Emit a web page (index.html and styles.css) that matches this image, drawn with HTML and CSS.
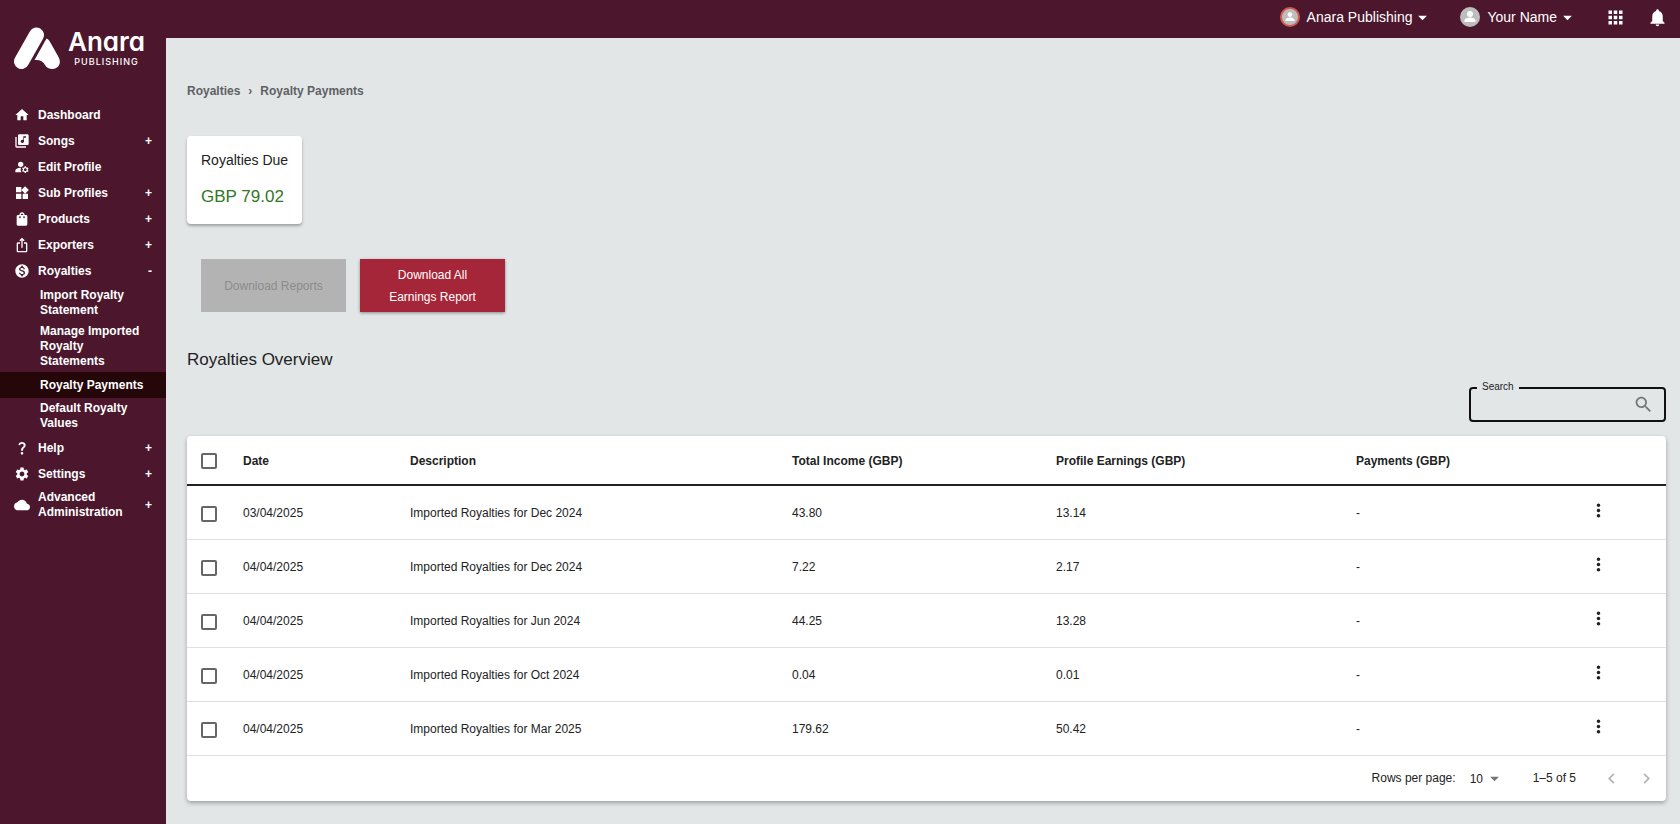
FILE: index.html
```html
<!DOCTYPE html>
<html lang="en">
<head>
    <meta charset="UTF-8">
    <meta name="viewport" content="width=device-width, initial-scale=1.0">
    <title>Royalty Payments</title>
    <link rel="stylesheet" href="styles.css">
</head>
<body>
    <aside class="sidebar">
        <a class="logo" href="#">
            <svg class="logo-mark" viewBox="0 0 46 42" aria-hidden="true">
                <path d="M7.500 34.500 L22.500 8" stroke="#fff" stroke-width="15" stroke-linecap="round"/>
                <path d="M32.500 11.500 Q34 11.500 35.500 14 L44.800 30.500 C48 37 43.500 42 38.500 42 C35 42 32.500 40.500 31 38 C29 34 25.500 32.500 20.500 33 Z" fill="#fff"/>
            </svg>
            <span class="logo-text">
                <span class="logo-name">Anara</span>
                <span class="logo-sub">PUBLISHING</span>
            </span>
        </a>

        <nav>
            <ul class="menu">
                <li><a href="#">
                    <svg class="icon" viewBox="0 0 24 24"><path d="M10 20v-6h4v6h5v-8h3L12 3 2 12h3v8z"/></svg>
                    <span>Dashboard</span>
                </a></li>
                <li><a href="#">
                    <svg class="icon" viewBox="0 0 24 24"><path d="M20 2H8c-1.100 0-2 .9-2 2v12c0 1.100.9 2 2 2h12c1.100 0 2-.9 2-2V4c0-1.100-.9-2-2-2zm-2 5h-3v5.500c0 1.380-1.120 2.500-2.500 2.500S10 13.880 10 12.500s1.120-2.500 2.500-2.500c.57 0 1.080.19 1.500.51V5h4v2zM4 6H2v14c0 1.100.9 2 2 2h14v-2H4V6z"/></svg>
                    <span>Songs</span><b>+</b>
                </a></li>
                <li><a href="#">
                    <svg class="icon" viewBox="0 0 24 24"><circle cx="10" cy="8" r="4"/><path d="M10.670 13.020C10.450 13.010 10.230 13 10 13c-2.420 0-4.680.67-6.610 1.820C2.510 15.340 2 16.320 2 17.350V20h9.260c-.79-1.130-1.260-2.510-1.260-4 0-1.070.25-2.070.67-2.980zM20.750 16c0-.22-.03-.42-.06-.63l1.140-1.010-1-1.730-1.450.49c-.32-.27-.68-.48-1.080-.63L18 11h-2l-.3 1.490c-.4.15-.76.36-1.080.63l-1.450-.49-1 1.730 1.140 1.010c-.03.21-.06.41-.06.63s.03.42.06.63l-1.140 1.010 1 1.730 1.450-.49c.32.27.68.48 1.080.63L16 21h2l.3-1.490c.4-.15.76-.36 1.080-.63l1.450.49 1-1.730-1.140-1.010c.03-.21.06-.41.06-.63zM17 18c-1.100 0-2-.9-2-2s.9-2 2-2 2 .9 2 2-.9 2-2 2z"/></svg>
                    <span>Edit Profile</span>
                </a></li>
                <li><a href="#">
                    <svg class="icon" viewBox="0 0 24 24"><path d="M13 13v8h8v-8h-8zM3 21h8v-8H3v8zM3 3v8h8V3H3zm13.660-1.310L11 7.340 16.660 13l5.660-5.660-5.660-5.650z"/></svg>
                    <span>Sub Profiles</span><b>+</b>
                </a></li>
                <li><a href="#">
                    <svg class="icon" viewBox="0 0 24 24"><path d="M18 6h-2c0-2.210-1.790-4-4-4S8 3.790 8 6H6c-1.100 0-2 .9-2 2v12c0 1.100.9 2 2 2h12c1.100 0 2-.9 2-2V8c0-1.100-.9-2-2-2zm-8 4c0 .55-.45 1-1 1s-1-.45-1-1V8h2v2zm2-6c1.100 0 2 .9 2 2h-4c0-1.100.9-2 2-2zm4 6c0 .55-.45 1-1 1s-1-.45-1-1V8h2v2z"/></svg>
                    <span>Products</span><b>+</b>
                </a></li>
                <li><a href="#">
                    <svg class="icon" viewBox="0 0 24 24"><path d="M16 5l-1.420 1.420-1.590-1.590V16h-1.980V4.830L9.420 6.420 8 5l4-4 4 4zm4 5v11c0 1.100-.9 2-2 2H6c-1.110 0-2-.9-2-2V10c0-1.110.89-2 2-2h3v2H6v11h12V10h-3V8h3c1.100 0 2 .89 2 2z"/></svg>
                    <span>Exporters</span><b>+</b>
                </a></li>
                <li>
                    <a href="#">
                        <svg class="icon" viewBox="0 0 24 24"><path d="M12 2C6.480 2 2 6.480 2 12s4.480 10 10 10 10-4.480 10-10S17.520 2 12 2zm1.410 16.090V20h-2.670v-1.930c-1.710-.36-3.160-1.460-3.270-3.400h1.960c.1 1.050.82 1.870 2.650 1.870 1.960 0 2.400-.98 2.400-1.590 0-.83-.44-1.610-2.670-2.140-2.480-.6-4.180-1.620-4.180-3.670 0-1.720 1.390-2.840 3.110-3.210V4h2.670v1.950c1.860.45 2.790 1.860 2.850 3.390H14.300c-.05-1.110-.64-1.870-2.220-1.870-1.500 0-2.400.68-2.400 1.640 0 .84.65 1.390 2.670 1.910s4.180 1.390 4.180 3.910c-.01 1.830-1.380 2.830-3.120 3.160z"/></svg>
                        <span>Royalties</span><b>-</b>
                    </a>
                    <ul class="submenu">
                        <li><a href="#">Import Royalty Statement</a></li>
                        <li><a href="#">Manage Imported Royalty Statements</a></li>
                        <li><a class="active" href="#">Royalty Payments</a></li>
                        <li><a href="#">Default Royalty Values</a></li>
                    </ul>
                </li>
                <li><a href="#">
                    <svg class="icon" viewBox="0 0 24 24"><path d="M11.070 12.850c.77-1.390 2.250-2.210 3.110-3.440.91-1.290.4-3.700-2.180-3.700-1.690 0-2.520 1.280-2.870 2.340L6.540 6.960C7.250 4.830 9.180 3 11.990 3c2.350 0 3.960 1.070 4.780 2.410.7 1.150 1.110 3.300.03 4.900-1.200 1.770-2.350 2.310-2.970 3.450-.25.46-.35.76-.35 2.240h-2.890c-.01-.78-.13-2.050.48-3.150zM14 20c0 1.100-.9 2-2 2s-2-.9-2-2 .9-2 2-2 2 .9 2 2z"/></svg>
                    <span>Help</span><b>+</b>
                </a></li>
                <li><a href="#">
                    <svg class="icon" viewBox="0 0 24 24"><path d="M19.140 12.940c.04-.3.06-.61.06-.94 0-.32-.02-.64-.07-.94l2.030-1.580c.18-.14.23-.41.12-.61l-1.920-3.320c-.12-.22-.37-.29-.59-.22l-2.390.96c-.5-.38-1.030-.7-1.620-.94l-.36-2.540c-.04-.24-.24-.41-.48-.41h-3.840c-.24 0-.43.17-.47.41l-.36 2.540c-.59.24-1.130.57-1.620.94l-2.390-.96c-.22-.08-.47 0-.59.22L2.740 8.870c-.12.21-.08.47.12.61l2.030 1.580c-.05.3-.09.63-.09.94s.02.64.07.94l-2.030 1.580c-.18.14-.23.41-.12.61l1.920 3.320c.12.22.37.29.59.22l2.390-.96c.5.38 1.030.7 1.620.94l.36 2.540c.05.24.24.41.48.41h3.840c.24 0 .44-.17.47-.41l.36-2.540c.59-.24 1.130-.56 1.620-.94l2.390.96c.22.08.47 0 .59-.22l1.920-3.320c.12-.22.07-.47-.12-.61l-2.010-1.580zM12 15.600c-1.980 0-3.600-1.620-3.600-3.600s1.620-3.600 3.600-3.600 3.600 1.620 3.600 3.600-1.620 3.600-3.600 3.600z"/></svg>
                    <span>Settings</span><b>+</b>
                </a></li>
                <li><a href="#">
                    <svg class="icon" viewBox="0 0 24 24"><path d="M19.350 10.040C18.670 6.590 15.640 4 12 4 9.110 4 6.600 5.640 5.350 8.040 2.340 8.360 0 10.910 0 14c0 3.310 2.690 6 6 6h13c2.760 0 5-2.240 5-5 0-2.640-2.050-4.780-4.650-4.960z"/></svg>
                    <span>Advanced Administration</span><b>+</b>
                </a></li>
            </ul>
        </nav>
    </aside>

    <div class="page">
        <header class="topbar">
            <button type="button" class="account">
                <svg class="avatar avatar-ring" viewBox="0 0 20 20"><circle cx="10" cy="7" r="3"/><path d="M4.500 15v-1.500c0-2 3.600-2.900 5.500-2.900s5.500.9 5.500 2.900V15z"/></svg>
                <span>Anara Publishing</span>
                <svg class="caret" viewBox="0 0 24 24"><path d="M7 10l5 5 5-5z"/></svg>
            </button>
            <button type="button" class="account">
                <svg class="avatar" viewBox="0 0 20 20"><circle cx="10" cy="7" r="3"/><path d="M4.500 15v-1.500c0-2 3.600-2.900 5.500-2.900s5.500.9 5.500 2.900V15z"/></svg>
                <span>Your Name</span>
                <svg class="caret" viewBox="0 0 24 24"><path d="M7 10l5 5 5-5z"/></svg>
            </button>
            <button type="button" class="icon-button" aria-label="Apps">
                <svg viewBox="0 0 24 24"><path d="M4 8h4V4H4v4zm6 12h4v-4h-4v4zm-6 0h4v-4H4v4zm0-6h4v-4H4v4zm6 0h4v-4h-4v4zm6-10v4h4V4h-4zm-6 4h4V4h-4v4zm6 6h4v-4h-4v4zm0 6h4v-4h-4v4z"/></svg>
            </button>
            <button type="button" class="icon-button" aria-label="Notifications">
                <svg viewBox="0 0 24 24"><path d="M12 22c1.100 0 2-.9 2-2h-4c0 1.100.89 2 2 2zm6-6v-5c0-3.070-1.640-5.640-4.500-6.320V4c0-.83-.67-1.500-1.500-1.500s-1.500.67-1.500 1.500v.68C7.630 5.360 6 7.920 6 11v5l-2 2v1h16v-1l-2-2z"/></svg>
            </button>
        </header>

        <main>
            <nav class="breadcrumb" aria-label="Breadcrumb">
                <a href="#">Royalties</a>
                <span>›</span>
                <a href="#">Royalty Payments</a>
            </nav>

            <section class="due-card">
                <h2>Royalties Due</h2>
                <p>GBP 79.02</p>
            </section>

            <div class="button-row">
                <button type="button" disabled>Download Reports</button>
                <button type="button">Download All Earnings Report</button>
            </div>

            <h1>Royalties Overview</h1>

            <div class="search">
                <label for="search">Search</label>
                <input type="text" id="search" name="search">
                <svg viewBox="0 0 24 24"><path d="M15.500 14h-.79l-.28-.27C15.410 12.590 16 11.110 16 9.500 16 5.910 13.090 3 9.500 3S3 5.910 3 9.500 5.910 16 9.500 16c1.610 0 3.090-.59 4.230-1.570l.27.28v.79l5 4.990L20.490 19l-4.990-5zm-6 0C7.010 14 5 11.990 5 9.500S7.010 5 9.500 5 14 7.010 14 9.500 11.990 14 9.500 14z"/></svg>
            </div>

            <div class="table-card">
                <table>
                    <thead>
                        <tr>
                            <th class="col-check"><input type="checkbox" aria-label="Select all"></th>
                            <th class="col-date">Date</th>
                            <th class="col-description">Description</th>
                            <th class="col-income">Total Income (GBP)</th>
                            <th class="col-earnings">Profile Earnings (GBP)</th>
                            <th class="col-payments">Payments (GBP)</th>
                            <th class="col-actions"></th>
                        </tr>
                    </thead>
                    <tbody>
                        <tr>
                            <td><input type="checkbox" aria-label="Select row"></td>
                            <td>03/04/2025</td>
                            <td>Imported Royalties for Dec 2024</td>
                            <td>43.80</td>
                            <td>13.14</td>
                            <td>-</td>
                            <td class="actions"><button type="button" aria-label="More"><svg viewBox="0 0 24 24"><path d="M12 8c1.100 0 2-.9 2-2s-.9-2-2-2-2 .9-2 2 .9 2 2 2zm0 2c-1.100 0-2 .9-2 2s.9 2 2 2 2-.9 2-2-.9-2-2-2zm0 6c-1.100 0-2 .9-2 2s.9 2 2 2 2-.9 2-2-.9-2-2-2z"/></svg></button></td>
                        </tr>
                        <tr>
                            <td><input type="checkbox" aria-label="Select row"></td>
                            <td>04/04/2025</td>
                            <td>Imported Royalties for Dec 2024</td>
                            <td>7.22</td>
                            <td>2.17</td>
                            <td>-</td>
                            <td class="actions"><button type="button" aria-label="More"><svg viewBox="0 0 24 24"><path d="M12 8c1.100 0 2-.9 2-2s-.9-2-2-2-2 .9-2 2 .9 2 2 2zm0 2c-1.100 0-2 .9-2 2s.9 2 2 2 2-.9 2-2-.9-2-2-2zm0 6c-1.100 0-2 .9-2 2s.9 2 2 2 2-.9 2-2-.9-2-2-2z"/></svg></button></td>
                        </tr>
                        <tr>
                            <td><input type="checkbox" aria-label="Select row"></td>
                            <td>04/04/2025</td>
                            <td>Imported Royalties for Jun 2024</td>
                            <td>44.25</td>
                            <td>13.28</td>
                            <td>-</td>
                            <td class="actions"><button type="button" aria-label="More"><svg viewBox="0 0 24 24"><path d="M12 8c1.100 0 2-.9 2-2s-.9-2-2-2-2 .9-2 2 .9 2 2 2zm0 2c-1.100 0-2 .9-2 2s.9 2 2 2 2-.9 2-2-.9-2-2-2zm0 6c-1.100 0-2 .9-2 2s.9 2 2 2 2-.9 2-2-.9-2-2-2z"/></svg></button></td>
                        </tr>
                        <tr>
                            <td><input type="checkbox" aria-label="Select row"></td>
                            <td>04/04/2025</td>
                            <td>Imported Royalties for Oct 2024</td>
                            <td>0.04</td>
                            <td>0.01</td>
                            <td>-</td>
                            <td class="actions"><button type="button" aria-label="More"><svg viewBox="0 0 24 24"><path d="M12 8c1.100 0 2-.9 2-2s-.9-2-2-2-2 .9-2 2 .9 2 2 2zm0 2c-1.100 0-2 .9-2 2s.9 2 2 2 2-.9 2-2-.9-2-2-2zm0 6c-1.100 0-2 .9-2 2s.9 2 2 2 2-.9 2-2-.9-2-2-2z"/></svg></button></td>
                        </tr>
                        <tr>
                            <td><input type="checkbox" aria-label="Select row"></td>
                            <td>04/04/2025</td>
                            <td>Imported Royalties for Mar 2025</td>
                            <td>179.62</td>
                            <td>50.42</td>
                            <td>-</td>
                            <td class="actions"><button type="button" aria-label="More"><svg viewBox="0 0 24 24"><path d="M12 8c1.100 0 2-.9 2-2s-.9-2-2-2-2 .9-2 2 .9 2 2 2zm0 2c-1.100 0-2 .9-2 2s.9 2 2 2 2-.9 2-2-.9-2-2-2zm0 6c-1.100 0-2 .9-2 2s.9 2 2 2 2-.9 2-2-.9-2-2-2z"/></svg></button></td>
                        </tr>
                    </tbody>
                </table>

                <div class="pagination">
                    <label for="rows">Rows per page:</label>
                    <div class="rows-select">
                        <select id="rows" name="rows">
                            <option>10</option>
                            <option>25</option>
                            <option>50</option>
                        </select>
                        <svg viewBox="0 0 24 24"><path d="M7 10l5 5 5-5z"/></svg>
                    </div>
                    <span class="range">1–5 of 5</span>
                    <button type="button" aria-label="Previous page" disabled><svg viewBox="0 0 24 24"><path d="M15.410 7.410L14 6l-6 6 6 6 1.410-1.410L10.830 12z"/></svg></button>
                    <button type="button" aria-label="Next page" disabled><svg viewBox="0 0 24 24"><path d="M10 6L8.590 7.410 13.170 12l-4.580 4.590L10 18l6-6z"/></svg></button>
                </div>
            </div>
        </main>
    </div>
</body>
</html>
```
FILE: styles.css
```css
* {
    box-sizing: border-box;
}
body {
    font-family: "Liberation Sans", Helvetica, Arial, sans-serif;
    font-size: 12px;
    line-height: 15px;
    margin: 0;
    min-height: 100vh;
    display: flex;
    background-color: #e2e6e7;
    color: #222;
}
a {
    color: inherit;
    text-decoration: none;
}
ul {
    list-style: none;
    margin: 0;
    padding: 0;
}
button, input, select {
    font-family: inherit;
    font-size: inherit;
    color: inherit;
}
button {
    border: none;
    background: none;
    padding: 0;
    cursor: pointer;
}
svg {
    display: block;
    fill: currentColor;
    flex-shrink: 0;
}

/* Sidebar */
.sidebar {
    width: 166px;
    flex-shrink: 0;
    background-color: #4c172c;
    color: #fff;
    font-weight: bold;
}
.logo {
    display: flex;
    align-items: center;
    gap: 8px;
    height: 102px;
    padding: 0 14px 6px;
}
.logo-mark {
    width: 46px;
    height: 42px;
}
.logo-text {
    display: flex;
    flex-direction: column;
    align-items: center;
    font-family: Inter, sans-serif;
}
.logo-name {
    font-size: 26px;
    line-height: 28px;
    font-weight: 600;
    font-feature-settings: "cv11";
}
.logo-sub {
    font-size: 9px;
    line-height: 12px;
    font-weight: 500;
    letter-spacing: 1px;
}
.menu a {
    display: flex;
    align-items: center;
    gap: 8px;
    min-height: 26px;
    padding: 3px 14px;
}
.menu span {
    flex: 1;
}
.icon {
    width: 16px;
    height: 16px;
}
.submenu {
    padding: 1px 0;
}
.submenu a {
    padding: 3px 18px 3px 40px;
}
.submenu .active {
    background-color: #250609;
}

/* Top bar */
.page {
    flex: 1;
    min-width: 0;
}
.topbar {
    display: flex;
    align-items: center;
    justify-content: flex-end;
    height: 38px;
    padding: 0 12px 4px 0;
    background-color: #4c172c;
    color: #fff;
}
.account {
    display: flex;
    align-items: center;
    margin-right: 27px;
    font-size: 14px;
}
.account span {
    margin-left: 7px;
}
.avatar {
    width: 20px;
    height: 20px;
    border-radius: 50%;
    background-color: #bdbdbd;
}
.avatar-ring {
    border: 2px solid #cf5a4f;
}
.caret {
    width: 21px;
    height: 21px;
}
.icon-button svg {
    width: 21px;
    height: 21px;
}
.icon-button + .icon-button {
    margin-left: 21px;
}

/* Content */
main {
    padding: 46px 14px 22px 21px;
}
.breadcrumb {
    display: flex;
    gap: 8px;
    font-weight: bold;
    color: #5f6163;
}
.due-card {
    width: fit-content;
    margin-top: 37px;
    padding: 14px;
    border-radius: 4px;
    background-color: #fff;
    box-shadow: 0 2px 3px rgba(0, 0, 0, 0.3);
}
.due-card h2 {
    margin: 0 0 14px;
    font-size: 14px;
    line-height: 20px;
    font-weight: normal;
}
.due-card p {
    margin: 0;
    font-size: 17px;
    line-height: 26px;
    color: #33771f;
}
.button-row {
    display: flex;
    gap: 14px;
    margin: 35px 0 0 14px;
}
.button-row button {
    width: 145px;
    min-height: 53px;
    padding: 0 16px;
    line-height: 22px;
    background-color: #a62639;
    color: #fff;
    box-shadow: 0 1px 3px rgba(0, 0, 0, 0.4);
}
.button-row button:disabled {
    background-color: #b3b3b3;
    color: #8c8c8c;
    box-shadow: none;
}
h1 {
    margin: 36px 0 15px;
    font-size: 17px;
    line-height: 24px;
    font-weight: normal;
}

/* Search */
.search {
    position: relative;
    display: flex;
    align-items: center;
    width: 197px;
    height: 35px;
    margin-left: auto;
    padding-right: 10px;
    border: 2px solid #111;
    border-radius: 4px;
}
.search label {
    position: absolute;
    top: -10px;
    left: 6px;
    padding: 0 5px;
    font-size: 10px;
    background-color: #e2e6e7;
}
.search input {
    flex: 1;
    min-width: 0;
    border: none;
    outline: none;
    background: none;
    padding: 0 12px;
}
.search svg {
    width: 21px;
    height: 21px;
    color: #777;
}

/* Table */
.table-card {
    margin-top: 14px;
    border-radius: 4px;
    background-color: #fff;
    box-shadow: 0 2px 4px rgba(0, 0, 0, 0.3);
}
table {
    width: 100%;
    table-layout: fixed;
    border-collapse: separate;
    border-spacing: 0;
}
th, td {
    padding: 2px 14px 0;
    text-align: left;
}
th {
    height: 50px;
    border-bottom: 2px solid #222;
}
td {
    height: 54px;
    border-bottom: 1px solid #e0e0e0;
}
.col-check {
    width: 42px;
}
.col-date {
    width: 167px;
}
.col-description {
    width: 382px;
}
.col-income {
    width: 264px;
}
.col-earnings {
    width: 300px;
}
.col-payments {
    width: 188px;
}
.col-actions {
    width: 136px;
}
input[type="checkbox"] {
    appearance: none;
    display: block;
    width: 16px;
    height: 16px;
    margin: 0;
    border: 2px solid #666;
    border-radius: 2px;
}
input[type="checkbox"]:checked {
    background-color: #666;
}
.actions {
    padding: 0 14px 4px;
}
.actions button {
    display: block;
    margin: 0 auto;
}
.actions svg {
    width: 21px;
    height: 21px;
}

/* Pagination */
.pagination {
    display: flex;
    align-items: center;
    justify-content: flex-end;
    height: 45px;
    padding-right: 2px;
}
.rows-select {
    display: flex;
    align-items: center;
    margin: 0 28px 0 14px;
}
.rows-select select {
    appearance: none;
    border: none;
    background: none;
    padding: 0;
}
.rows-select svg {
    width: 21px;
    height: 21px;
    color: #757575;
}
.range {
    margin-right: 18px;
}
.pagination button {
    padding: 7px;
    color: #b5b5b5;
}
.pagination button svg {
    width: 21px;
    height: 21px;
}
```
